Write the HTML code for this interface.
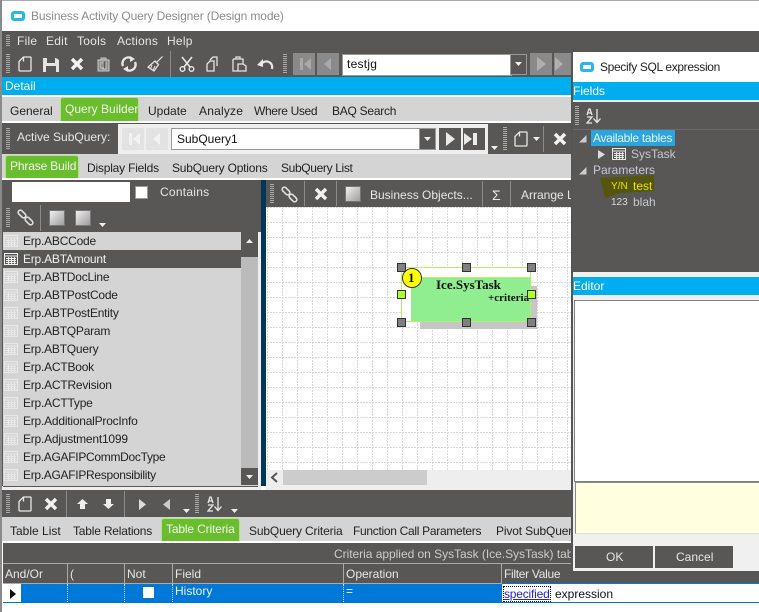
<!DOCTYPE html>
<html><head><meta charset="utf-8"><style>
html,body{margin:0;padding:0;background:#fff}
#p{position:relative;width:759px;height:612px;overflow:hidden;background:#fff;font:12px "Liberation Sans",sans-serif}
#p div{position:absolute}
.t{white-space:nowrap;line-height:14px;color:#e6e6e6;letter-spacing:0}
.d{color:#222}
.l{letter-spacing:-.22px}
.m{letter-spacing:.25px}
.g{background:#6abd2d;border:1px solid #b5e08f;border-bottom:none;border-radius:3px 3px 0 0;box-sizing:border-box}
.s{background:#8b8b8b;width:1px}
.n{background:#8a8a8a;width:22px;height:22px}
.gr{width:4px;background:repeating-linear-gradient(#aaa 0 1px,#595755 1px 2px)}
svg{position:absolute;overflow:visible}
.h{width:7px;height:7px;background:#808080;border:1px solid #333}
.hg{background:#adff2f}
</style></head><body><div id="p">
<svg width="0" height="0" style="position:absolute"><defs>
<symbol id="doc" viewBox="0 0 14 16"><path d="M1 5.500L5.500 1H12.500Q13 1 13 2V14Q13 15 12 15H2Q1 15 1 14ZM5.500 1V5.500" fill="none" stroke="#e8e8e8" stroke-width="1.3"/></symbol>
<symbol id="x" viewBox="0 0 14 14"><path d="M2 2L12 12M12 2L2 12" stroke="#f2f2f2" stroke-width="3.4" fill="none"/></symbol>
<symbol id="link" viewBox="0 0 17 17"><rect x="0.500" y="2.800" width="9" height="4.400" rx="2.200" transform="rotate(45 5 5)" fill="none" stroke="#e0e0e0" stroke-width="1.600"/><rect x="7.500" y="9.800" width="9" height="4.400" rx="2.200" transform="rotate(45 12 12)" fill="none" stroke="#e0e0e0" stroke-width="1.600"/></symbol>
<symbol id="sq" viewBox="0 0 16 16"><defs><linearGradient id="lg" x1="0" y1="0" x2="1" y2="1"><stop offset="0" stop-color="#f2f2f2"/><stop offset="1" stop-color="#9a9a9a"/></linearGradient></defs><rect x=".5" y=".5" width="15" height="15" fill="url(#lg)" stroke="#777"/></symbol>
<symbol id="tb" viewBox="0 0 14 12"><rect x=".5" y=".5" width="13" height="11" fill="none" stroke="currentColor"/><path d="M.5 3H13.500M2 5.500H12M2 7.500H12M2 9.500H12M4.500 4V11M7.500 4V11M10.500 4V11" stroke="currentColor" fill="none"/></symbol>
<symbol id="az" viewBox="0 0 16 16"><path d="M11 1V14M7.500 10.500L11 14.500L14.500 10.500" fill="none" stroke="#e8e8e8" stroke-width="1.3"/><path d="M1 7L3 1H4L6 7M2 5H5M1 9H6L1 15H6" fill="none" stroke="#e8e8e8" stroke-width="1.3"/></symbol>
</defs></svg>

<!-- window frame/title -->
<div style="left:0;top:0;width:759px;height:1px;background:#aaa"></div>
<div style="left:0;top:0;width:2px;height:612px;background:#8a8a8a"></div>
<div style="left:11px;top:11px;width:14px;height:10px;background:#29b6ea;border-radius:3px"></div>
<div style="left:14px;top:14px;width:8px;height:4px;background:#fff"></div>
<div class="t" style="left:31px;top:9px;color:#8c8c8c;letter-spacing:-.13px">Business Activity Query Designer (Design mode)</div>

<!-- top dark -->
<div style="left:2px;top:31px;width:757px;height:46px;background:#595755"></div>
<div class="gr" style="left:6px;top:35px;height:11px"></div>
<div class="t m" style="left:17px;top:34px">File</div>
<div class="t m" style="left:46px;top:34px">Edit</div>
<div class="t m" style="left:77px;top:34px">Tools</div>
<div class="t m" style="left:117px;top:34px">Actions</div>
<div class="t m" style="left:167px;top:34px">Help</div>
<div class="gr" style="left:6px;top:54px;height:20px"></div>
<svg style="left:18px;top:56px" width="14" height="16"><use href="#doc"/></svg>
<svg style="left:43px;top:57px" width="16" height="15"><path d="M0 1H13L16 3V15H0ZM4 1V6H12V1M3 9H13V15H3Z" fill="#e4e4e4" fill-rule="evenodd"/></svg>
<svg style="left:70px;top:57px" width="14" height="14"><use href="#x"/></svg>
<svg style="left:96px;top:57px" width="15" height="15"><path d="M2 3H13V14H2ZM5 3V1H10V3M5 5V11H8M7 4V12H10V5" fill="#8f8f8f" stroke="#c8c8c8"/></svg>
<svg style="left:121px;top:56px" width="16" height="16"><path d="M2 10A6 6 0 0 1 10 2M14 6A6 6 0 0 1 6 14" fill="none" stroke="#e8e8e8" stroke-width="2.400"/><path d="M9 0L14 3L9 6ZM7 10L2 13L7 16Z" fill="#e8e8e8"/></svg>
<svg style="left:147px;top:56px" width="16" height="16"><path d="M15.500 .5L9 7" fill="none" stroke="#e4e4e4" stroke-width="1.200"/><path d="M8 5L11.500 8.500L7 15L1 11Z" fill="none" stroke="#e4e4e4" stroke-width="1.300"/><path d="M5 9L3.500 12.500M8 10L6 14" stroke="#e4e4e4"/></svg>
<div class="s" style="left:170px;top:51px;height:26px"></div>
<svg style="left:179px;top:56px" width="16" height="16"><path d="M3 1L11 11M13 1L5 11" stroke="#e8e8e8" stroke-width="1.600"/><circle cx="3.500" cy="13" r="2.300" fill="none" stroke="#e8e8e8" stroke-width="1.400"/><circle cx="12.500" cy="13" r="2.300" fill="none" stroke="#e8e8e8" stroke-width="1.400"/></svg>
<svg style="left:206px;top:56px" width="14" height="16"><path d="M4 4L7 1H11V10M1 8L4 5H8V15H1Z" fill="none" stroke="#e4e4e4" stroke-width="1.300"/></svg>
<svg style="left:232px;top:56px" width="15" height="16"><path d="M1 3H11V8M6 15H1V3M4 3V1H8V3M6 8H11L14 10V15H6Z" fill="none" stroke="#e4e4e4" stroke-width="1.300"/></svg>
<svg style="left:257px;top:58px" width="16" height="12"><path d="M4 6Q8 2 12 4T15 11" fill="none" stroke="#e8e8e8" stroke-width="2.200"/><path d="M0 7L6 1V9Z" fill="#e8e8e8"/></svg>
<div class="gr" style="left:283px;top:54px;height:20px"></div>
<div class="n" style="left:293px;top:53px"></div><div class="n" style="left:317px;top:53px"></div>
<svg style="left:293px;top:53px" width="46" height="22"><path d="M7 5H10V17H7ZM18 5V17L11 11Z M38 5V17L31 11Z" fill="#a9a9a9"/></svg>
<div style="left:342px;top:54px;width:168px;height:20px;background:#fff;border:1px solid #999"></div>
<div class="t d m" style="left:347px;top:57px;color:#111">testjg</div>
<div style="left:510px;top:54px;width:17px;height:21px;background:#595755;border:1px solid #999;box-sizing:border-box"></div>
<svg style="left:515px;top:62px" width="7" height="4"><path d="M0 0H7L3.500 4Z" fill="#eee"/></svg>
<div class="n" style="left:530px;top:53px"></div><div class="n" style="left:554px;top:53px;width:17px"></div>
<svg style="left:530px;top:53px" width="40" height="22"><path d="M7 4L16 11L7 18ZM25 4L33 11L25 18Z" fill="#b0b0b0"/></svg>

<!-- detail bar -->
<div style="left:2px;top:77px;width:757px;height:18px;background:#00adef"></div>
<div class="t" style="left:5px;top:79px;color:#fff">Detail</div>
<div style="left:2px;top:97px;width:757px;height:24px;background:#d4d4d4"></div>
<div class="t d" style="left:10px;top:104px">General</div>
<div class="g" style="left:60px;top:97px;width:79px;height:24px"></div>
<div class="t" style="left:65px;top:102px;color:#f2f2f2">Query Builder</div>
<div class="t d" style="left:148px;top:104px">Update</div>
<div class="t d" style="left:199px;top:104px;letter-spacing:.2px">Analyze</div>
<div class="t d" style="left:254px;top:104px;letter-spacing:-.35px">Where Used</div>
<div class="t d" style="left:332px;top:104px;letter-spacing:-.25px">BAQ Search</div>

<!-- subquery row -->
<div style="left:2px;top:123px;width:757px;height:31px;background:#595755"></div>
<div class="gr" style="left:6px;top:128px;height:22px"></div>
<div class="t" style="left:17px;top:130px">Active SubQuery:</div>
<div style="left:118px;top:124px;width:370px;height:30px;background:#eee"></div>
<div style="left:122px;top:128px;width:22px;height:22px;background:#e2e2e2"></div>
<div style="left:146px;top:128px;width:22px;height:22px;background:#e2e2e2"></div>
<svg style="left:122px;top:128px" width="46" height="22"><path d="M7 5H10V17H7ZM18 5V17L11 11ZM38 5V17L31 11Z" fill="#f2f2f2"/></svg>
<div style="left:171px;top:128px;width:250px;height:22px;background:#fff;border:1px solid #999;box-sizing:border-box"></div>
<div class="t d" style="left:177px;top:132px;color:#111">SubQuery1</div>
<div style="left:419px;top:128px;width:17px;height:22px;background:#595755;border:1px solid #999;box-sizing:border-box"></div>
<svg style="left:424px;top:137px" width="7" height="4"><path d="M0 0H7L3.500 4Z" fill="#eee"/></svg>
<div style="left:439px;top:128px;width:22px;height:22px;background:#595755"></div>
<div style="left:463px;top:128px;width:22px;height:22px;background:#595755"></div>
<svg style="left:439px;top:128px" width="46" height="22"><path d="M7 4L16 11L7 18ZM25 5L33 11L25 17ZM34 5H38V17H34Z" fill="#eaeaea"/></svg>
<svg style="left:491px;top:146px" width="7" height="4"><path d="M0 0H7L3.500 4Z" fill="#eee"/></svg>
<div class="gr" style="left:503px;top:127px;height:23px"></div>
<svg style="left:514px;top:131px" width="14" height="16"><use href="#doc"/></svg>
<svg style="left:533px;top:137px" width="7" height="4"><path d="M0 0H7L3.500 4Z" fill="#eee"/></svg>
<div class="s" style="left:543px;top:126px;height:26px"></div>
<svg style="left:553px;top:132px" width="14" height="14"><use href="#x"/></svg>

<!-- sub tabs -->
<div style="left:2px;top:154px;width:757px;height:24px;background:#d4d4d4"></div>
<div class="g" style="left:5px;top:155px;width:74px;height:23px"></div>
<div class="t" style="left:10px;top:159px;color:#f2f2f2;letter-spacing:-.15px">Phrase Build</div>
<div class="t d" style="left:87px;top:161px;letter-spacing:-.2px">Display Fields</div>
<div class="t d" style="left:172px;top:161px;letter-spacing:-.2px">SubQuery Options</div>
<div class="t d" style="left:281px;top:161px;letter-spacing:-.35px">SubQuery List</div>

<!-- left panel -->
<div style="left:2px;top:180px;width:259px;height:310px;background:#eee"></div>
<div style="left:2px;top:180px;width:259px;height:52px;background:#595755"></div>
<div style="left:12px;top:182px;width:118px;height:20px;background:#fff"></div>
<div style="left:135px;top:186px;width:13px;height:13px;background:#fff;border:1px solid #999;box-sizing:border-box"></div>
<div class="t m" style="left:160px;top:185px">Contains</div>
<div class="gr" style="left:6px;top:208px;height:20px"></div>
<svg style="left:17px;top:209px" width="17" height="17"><use href="#link"/></svg>
<div class="s" style="left:40px;top:205px;height:26px"></div>
<svg style="left:49px;top:210px" width="16" height="16"><use href="#sq"/></svg>
<svg style="left:75px;top:210px" width="16" height="16"><use href="#sq"/></svg>
<svg style="left:99px;top:223px" width="7" height="4"><path d="M0 0H7L3.500 4Z" fill="#eee"/></svg>

<!-- list -->
<div style="left:3px;top:232px;width:255px;height:254px;background:#d4d4d4;border-bottom:1px solid #595755"></div>
<div style="left:3px;top:250px;width:238px;height:18px;background:#595755"></div>
<div class="t d l" style="left:23px;top:234px">Erp.ABCCode</div>
<div class="t l" style="left:23px;top:252px;color:#f0f0f0">Erp.ABTAmount</div>
<div class="t d l" style="left:23px;top:270px">Erp.ABTDocLine</div>
<div class="t d l" style="left:23px;top:288px">Erp.ABTPostCode</div>
<div class="t d l" style="left:23px;top:306px">Erp.ABTPostEntity</div>
<div class="t d l" style="left:23px;top:324px">Erp.ABTQParam</div>
<div class="t d l" style="left:23px;top:342px">Erp.ABTQuery</div>
<div class="t d l" style="left:23px;top:360px">Erp.ACTBook</div>
<div class="t d l" style="left:23px;top:378px">Erp.ACTRevision</div>
<div class="t d l" style="left:23px;top:396px">Erp.ACTType</div>
<div class="t d l" style="left:23px;top:414px">Erp.AdditionalProcInfo</div>
<div class="t d l" style="left:23px;top:432px">Erp.Adjustment1099</div>
<div class="t d l" style="left:23px;top:450px;letter-spacing:-.3px">Erp.AGAFIPCommDocType</div>
<div class="t d l" style="left:23px;top:468px;letter-spacing:-.3px">Erp.AGAFIPResponsibility</div>
<svg style="left:4px;top:235px;color:#e8e8e8" width="14" height="12"><use href="#tb"/></svg>
<svg style="left:4px;top:253px;color:#f0f0f0" width="14" height="12"><use href="#tb"/></svg>
<svg style="left:4px;top:271px;color:#e8e8e8" width="14" height="12"><use href="#tb"/></svg>
<svg style="left:4px;top:289px;color:#e8e8e8" width="14" height="12"><use href="#tb"/></svg>
<svg style="left:4px;top:307px;color:#e8e8e8" width="14" height="12"><use href="#tb"/></svg>
<svg style="left:4px;top:325px;color:#e8e8e8" width="14" height="12"><use href="#tb"/></svg>
<svg style="left:4px;top:343px;color:#e8e8e8" width="14" height="12"><use href="#tb"/></svg>
<svg style="left:4px;top:361px;color:#e8e8e8" width="14" height="12"><use href="#tb"/></svg>
<svg style="left:4px;top:379px;color:#e8e8e8" width="14" height="12"><use href="#tb"/></svg>
<svg style="left:4px;top:397px;color:#e8e8e8" width="14" height="12"><use href="#tb"/></svg>
<svg style="left:4px;top:415px;color:#e8e8e8" width="14" height="12"><use href="#tb"/></svg>
<svg style="left:4px;top:433px;color:#e8e8e8" width="14" height="12"><use href="#tb"/></svg>
<svg style="left:4px;top:451px;color:#e8e8e8" width="14" height="12"><use href="#tb"/></svg>
<svg style="left:4px;top:469px;color:#e8e8e8" width="14" height="12"><use href="#tb"/></svg>
<div style="left:241px;top:232px;width:17px;height:253px;background:#bbb"></div>
<div style="left:241px;top:232px;width:17px;height:25px;background:#595755"></div>
<div style="left:241px;top:468px;width:17px;height:17px;background:#595755"></div>
<svg style="left:246px;top:239px" width="7" height="4"><path d="M0 4H7L3.500 0Z" fill="#eee"/></svg>
<svg style="left:246px;top:475px" width="7" height="4"><path d="M0 0H7L3.500 4Z" fill="#eee"/></svg>
<div style="left:2px;top:232px;width:1px;height:254px;background:#595755"></div>

<!-- splitter -->
<div style="left:261px;top:180px;width:5px;height:306px;background:#02375a"></div>
<!-- canvas toolbar -->
<div style="left:266px;top:180px;width:305px;height:27px;background:#595755"></div>
<div class="gr" style="left:270px;top:184px;height:20px"></div>
<svg style="left:281px;top:186px" width="17" height="17"><use href="#link"/></svg>
<div class="s" style="left:304px;top:181px;height:25px"></div>
<svg style="left:314px;top:187px" width="14" height="14"><use href="#x"/></svg>
<div class="s" style="left:336px;top:181px;height:25px"></div>
<svg style="left:345px;top:186px" width="16" height="16"><use href="#sq"/></svg>
<div class="t" style="left:370px;top:188px">Business Objects...</div>
<div class="s" style="left:482px;top:181px;height:25px"></div>
<div class="t" style="left:492px;top:188px;font-size:14px">Σ</div>
<div class="s" style="left:510px;top:181px;height:25px"></div>
<div class="t" style="left:521px;top:188px">Arrange Layout</div>

<!-- canvas -->
<div style="left:266px;top:207px;width:305px;height:263px;overflow:hidden;background:#fff">
<svg width="305" height="263" style="left:0;top:0" shape-rendering="crispEdges"><defs><pattern id="gp" x="1" y="0" width="15" height="15" patternUnits="userSpaceOnUse"><path d="M.5 0V15" stroke="#d8d8d8" stroke-dasharray="2 1" fill="none"/><path d="M0 .5H15" stroke="#d8d8d8" stroke-dasharray="2 1" fill="none"/></pattern></defs><rect width="305" height="263" fill="url(#gp)"/></svg>
</div>
<div style="left:266px;top:470px;width:305px;height:20px;background:#eee"></div>
<div style="left:283px;top:470px;width:144px;height:15px;background:#ccc"></div>
<svg style="left:271px;top:473px" width="7" height="9"><path d="M6 0L1 4.500L6 9" fill="none" stroke="#595755" stroke-width="2"/></svg>

<!-- node -->
<div style="left:420px;top:286px;width:117px;height:43px;background:#c6c6c6"></div>
<div style="left:401px;top:267px;width:130px;height:55px;background:#fff;border:1px solid #b6f06a;box-sizing:border-box"></div>
<div style="left:411px;top:277px;width:120px;height:45px;background:#90ee90;border-top:1px solid #b6f06a;border-right:1px solid #b6f06a;border-bottom:1px solid #b6f06a;box-sizing:border-box"></div>
<div style="left:402px;top:268px;width:20px;height:20px;background:#ff0;border:1px solid #333;border-radius:50%;box-sizing:border-box"></div>
<div class="t" style="left:408px;top:270px;color:#111;font:bold 13px/16px 'Liberation Serif',serif">1</div>
<div class="t" style="left:436px;top:278px;color:#111;font:bold 13px/14px 'Liberation Serif',serif">Ice.SysTask</div>
<div class="t" style="left:488px;top:292px;color:#111;font:bold 11px/13px 'Liberation Serif',serif">+criteria</div>
<div class="h" style="left:397px;top:263px"></div><div class="h" style="left:462px;top:263px"></div><div class="h" style="left:527px;top:263px"></div>
<div class="h hg" style="left:397px;top:290px"></div><div class="h hg" style="left:527px;top:290px"></div>
<div class="h" style="left:397px;top:318px"></div><div class="h" style="left:462px;top:318px"></div><div class="h" style="left:527px;top:318px"></div>

<!-- bottom toolbar -->
<div style="left:2px;top:490px;width:757px;height:27px;background:#595755"></div>
<div class="gr" style="left:6px;top:494px;height:20px"></div>
<svg style="left:18px;top:496px" width="14" height="16"><use href="#doc"/></svg>
<svg style="left:44px;top:497px" width="14" height="14"><use href="#x"/></svg>
<div class="s" style="left:66px;top:491px;height:26px"></div>
<svg style="left:77px;top:499px" width="11" height="10"><path d="M5.500 0L11 5H8V10H3V5H0Z" fill="#eee"/></svg>
<svg style="left:103px;top:499px" width="11" height="10"><path d="M5.500 10L11 5H8V0H3V5H0Z" fill="#eee"/></svg>
<div class="s" style="left:124px;top:491px;height:26px"></div>
<svg style="left:139px;top:499px" width="7" height="11"><path d="M0 0L7 5.500L0 11Z" fill="#ddd"/></svg>
<svg style="left:163px;top:499px" width="7" height="11"><path d="M7 0L0 5.500L7 11Z" fill="#ccc"/></svg>
<svg style="left:183px;top:509px" width="7" height="4"><path d="M0 0H7L3.500 4Z" fill="#eee"/></svg>
<div class="gr" style="left:195px;top:494px;height:20px"></div>
<svg style="left:207px;top:496px" width="16" height="16"><use href="#az"/></svg>
<svg style="left:231px;top:509px" width="7" height="4"><path d="M0 0H7L3.500 4Z" fill="#eee"/></svg>

<!-- bottom tabs -->
<div style="left:2px;top:517px;width:757px;height:24px;background:#d4d4d4"></div>
<div class="t d" style="left:10px;top:524px">Table List</div>
<div class="t d" style="left:73px;top:524px;letter-spacing:-.2px">Table Relations</div>
<div class="g" style="left:161px;top:518px;width:79px;height:23px"></div>
<div class="t" style="left:166px;top:522px;color:#f2f2f2;letter-spacing:-.15px">Table Criteria</div>
<div class="t d" style="left:249px;top:524px;letter-spacing:-.15px">SubQuery Criteria</div>
<div class="t d" style="left:353px;top:524px;letter-spacing:-.3px">Function Call Parameters</div>
<div class="t d" style="left:496px;top:524px;letter-spacing:-.15px">Pivot SubQuery</div>

<!-- grid -->
<div style="left:3px;top:543px;width:756px;height:40px;background:#595755"></div>
<div class="t" style="left:334px;top:547px;color:#ccc;letter-spacing:-.03px">Criteria applied on SysTask (Ice.SysTask) table</div>
<div style="left:3px;top:563px;width:756px;height:1px;background:#aaa"></div>
<div style="left:3px;top:583px;width:756px;height:1px;background:#aaa"></div>
<div class="s" style="left:67px;top:564px;height:19px;background:#aaa"></div>
<div class="s" style="left:124px;top:564px;height:19px;background:#aaa"></div>
<div class="s" style="left:172px;top:564px;height:19px;background:#aaa"></div>
<div class="s" style="left:343px;top:564px;height:19px;background:#aaa"></div>
<div class="s" style="left:501px;top:564px;height:19px;background:#aaa"></div>
<div class="t" style="left:5px;top:567px">And/Or</div>
<div class="t" style="left:70px;top:567px">(</div>
<div class="t" style="left:127px;top:567px">Not</div>
<div class="t" style="left:175px;top:567px">Field</div>
<div class="t" style="left:346px;top:567px">Operation</div>
<div class="t" style="left:504px;top:567px;letter-spacing:-.3px">Filter Value</div>
<div style="left:21px;top:584px;width:481px;height:18px;background:#0078d7"></div>
<div style="left:3px;top:602px;width:756px;height:1px;background:#0078d7"></div>
<div style="left:502px;top:583px;width:257px;height:1px;background:#0078d7"></div>
<div style="left:67px;top:584px;width:1px;height:18px;border-left:1px dotted #cfe4f7"></div>
<div style="left:124px;top:584px;width:1px;height:18px;border-left:1px dotted #cfe4f7"></div>
<div style="left:172px;top:584px;width:1px;height:18px;border-left:1px dotted #cfe4f7"></div>
<div style="left:343px;top:584px;width:1px;height:18px;border-left:1px dotted #cfe4f7"></div>
<svg style="left:10px;top:589px" width="6" height="10"><path d="M0 0L6 5L0 10Z" fill="#111"/></svg>
<div style="left:143px;top:587px;width:11px;height:11px;background:#fff"></div>
<div class="t" style="left:175px;top:584px;color:#eef">History</div>
<div class="t" style="left:346px;top:584px;color:#eef">=</div>
<div class="t" style="left:504px;top:587px;color:#2222dd;text-decoration:underline;outline:1px dotted #113;letter-spacing:-.2px">specified</div>
<div class="t" style="left:555px;top:587px;color:#111">expression</div>

<!-- dialog -->
<div style="left:571px;top:51px;width:188px;height:522px;background:#f0f0f0;border-left:2px solid #555;border-top:1px solid #555;border-bottom:2px solid #555;box-sizing:border-box"></div>
<div style="left:573px;top:52px;width:186px;height:30px;background:#fff"></div>
<div style="left:580px;top:62px;width:14px;height:10px;background:#29b6ea;border-radius:3px"></div>
<div style="left:583px;top:65px;width:8px;height:4px;background:#fff"></div>
<div class="t" style="left:600px;top:60px;color:#222;letter-spacing:-.35px">Specify SQL expression</div>
<div style="left:573px;top:82px;width:186px;height:18px;background:#00adef"></div>
<div class="t" style="left:573px;top:84px;color:#fff">Fields</div>
<div style="left:573px;top:102px;width:186px;height:170px;background:#595755"></div>
<div style="left:573px;top:129px;width:186px;height:1px;background:#6a6a6a"></div>
<div class="gr" style="left:575px;top:106px;height:20px"></div>
<svg style="left:586px;top:108px" width="16" height="16"><use href="#az"/></svg>
<svg style="left:578px;top:134px" width="9" height="9"><path d="M8.500 1V8.500H1Z" fill="#ccc"/></svg>
<div style="left:591px;top:130px;width:84px;height:16px;background:#2ba5dc"></div>
<div class="t" style="left:593px;top:131px;color:#e8f4fb;letter-spacing:-.3px">Available tables</div>
<svg style="left:598px;top:150px" width="7" height="9"><path d="M0 0L7 4.500L0 9Z" fill="#ddd"/></svg>
<svg style="left:612px;top:148px;color:#e8e8e8" width="14" height="12"><use href="#tb"/></svg>
<div class="t" style="left:631px;top:147px;color:#c4c8d2">SysTask</div>
<svg style="left:578px;top:166px" width="9" height="9"><path d="M8.500 1V8.500H1Z" fill="#ccc"/></svg>
<div class="t" style="left:593px;top:163px;color:#c4c8d2">Parameters</div>
<svg style="left:600px;top:175px" width="55" height="24"><path d="M0 3L54 0V16L20 18L5 23Z" fill="#55550c"/></svg>
<div class="t" style="left:611px;top:180px;color:#e6e600;font-size:10px">Y/N</div>
<div class="t" style="left:633px;top:179px;color:#e6e600">test</div>
<div class="t" style="left:611px;top:196px;color:#d8d8d8;font-size:10px">123</div>
<div class="t" style="left:633px;top:195px;color:#c4c8d2">blah</div>
<div style="left:573px;top:277px;width:186px;height:18px;background:#00adef"></div>
<div class="t" style="left:573px;top:279px;color:#fff">Editor</div>
<div style="left:574px;top:300px;width:185px;height:182px;background:#fff;border:1px solid #808080;border-width:1px 0 1px 1px;box-sizing:border-box"></div>
<div style="left:575px;top:482px;width:184px;height:52px;background:#ffffe0;border:1px solid #888;border-width:1px 0 0 1px;border-bottom:1px solid #ddd;box-sizing:border-box"></div>
<div style="left:575px;top:546px;width:78px;height:22px;background:#595755"></div>
<div class="t" style="left:606px;top:550px">OK</div>
<div style="left:655px;top:546px;width:78px;height:22px;background:#595755"></div>
<div class="t" style="left:676px;top:550px">Cancel</div>
</div></body></html>
